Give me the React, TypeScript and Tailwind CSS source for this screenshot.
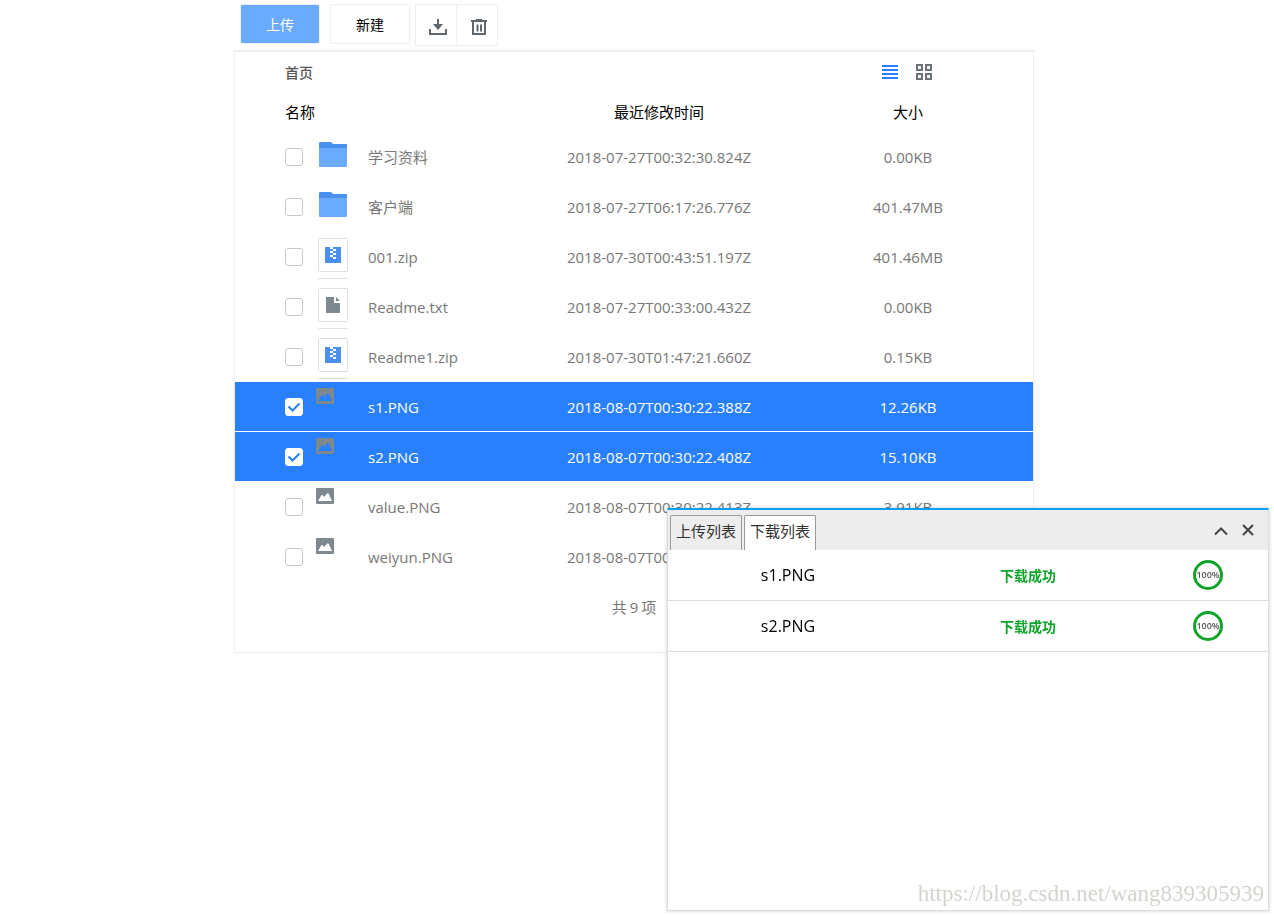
import { useState } from "react";

type FileKind = "folder" | "zip" | "txt" | "image";

interface FileItem {
  name: string;
  kind: FileKind;
  modified: string;
  size: string;
}

const files: FileItem[] = [
  { name: "学习资料", kind: "folder", modified: "2018-07-27T00:32:30.824Z", size: "0.00KB" },
  { name: "客户端", kind: "folder", modified: "2018-07-27T06:17:26.776Z", size: "401.47MB" },
  { name: "001.zip", kind: "zip", modified: "2018-07-30T00:43:51.197Z", size: "401.46MB" },
  { name: "Readme.txt", kind: "txt", modified: "2018-07-27T00:33:00.432Z", size: "0.00KB" },
  { name: "Readme1.zip", kind: "zip", modified: "2018-07-30T01:47:21.660Z", size: "0.15KB" },
  { name: "s1.PNG", kind: "image", modified: "2018-08-07T00:30:22.388Z", size: "12.26KB" },
  { name: "s2.PNG", kind: "image", modified: "2018-08-07T00:30:22.408Z", size: "15.10KB" },
  { name: "value.PNG", kind: "image", modified: "2018-08-07T00:30:22.413Z", size: "3.91KB" },
  { name: "weiyun.PNG", kind: "image", modified: "2018-08-07T00:30:22.433Z", size: "5.27KB" },
];

const downloads = [
  { name: "s1.PNG", status: "下载成功", percent: 100 },
  { name: "s2.PNG", status: "下载成功", percent: 100 },
];

function FileIcon({ kind }: { kind: FileKind }) {
  return (
    <svg width="34" height="42" viewBox="0 0 34 42" className="block" aria-hidden="true">
      {kind === "folder" && (
        <>
          <path d="M3 5a1 1 0 0 1 1-1h11l2 2h13a1 1 0 0 1 1 1v4H3z" fill="#4a90ee" />
          <path d="M3 10h28v18a1 1 0 0 1-1 1H4a1 1 0 0 1-1-1z" fill="#6aaaff" />
        </>
      )}
      {(kind === "zip" || kind === "txt") && (
        <>
          <rect x="2.5" y="0.5" width="29" height="33" rx="1" fill="#fff" stroke="#dedede" />
          <path d="M2.5 42v-.5a1 1 0 0 1 1-1h27a1 1 0 0 1 1 1v.5" fill="none" stroke="#dedede" />
        </>
      )}
      {kind === "zip" && (
        <>
          <path d="M9 9h16v16H9z" fill="#4a90ee" />
          <path d="M14 9h3v2h-3zM17 11h3v2h-3zM14 13h3v2h-3zM17 15h3v2h-3zM14 17h3v2h-3zM17 19h3v2h-3z" fill="#fff" />
        </>
      )}
      {kind === "txt" && (
        <path d="M10 9h8v6h6v10H10zM20 9l4 4h-4z" fill="#7d888f" />
      )}
      {kind === "image" && (
        <path
          fillRule="evenodd"
          d="M1 0h16a1 1 0 0 1 1 1v14a1 1 0 0 1-1 1H1a1 1 0 0 1-1-1V1a1 1 0 0 1 1-1zM2 13h14L12.500 5.500h-1.500L8 9 6.500 7h-1z"
          fill="#7d888f"
        />
      )}
    </svg>
  );
}

function Checkbox({ label, checked, onChange }: { label: string; checked: boolean; onChange: () => void }) {
  return (
    <div className="relative size-[18px]">
      <input
        type="checkbox"
        aria-label={label}
        checked={checked}
        onChange={onChange}
        className="block size-[18px] appearance-none rounded-[3px] border border-[#c8c8c8] bg-white checked:border-white"
      />
      {checked && (
        <svg viewBox="0 0 18 18" className="pointer-events-none absolute inset-0 size-[18px]" aria-hidden="true">
          <path d="M3.500 8.500l4 4 7-7" fill="none" stroke="#2980ff" strokeWidth="2" />
        </svg>
      )}
    </div>
  );
}

function Toolbar() {
  return (
    <div className="flex h-[50px] items-start pt-1 pl-1.5">
      <button className="h-10 w-20 rounded-xs border border-[#eee] bg-[#6aaaff] pt-0.5 text-sm text-white">上传</button>
      <button className="ml-2.5 h-10 w-20 rounded-xs border border-[#eee] bg-white pt-0.5 text-sm text-black">新建</button>
      <div className="ml-[5px] flex h-[42px] divide-x divide-[#eee] border border-[#eee] text-[#5f676c]">
        <button aria-label="下载" className="flex w-[41px] items-center justify-center pl-1">
          <svg width="18" height="18" viewBox="0 0 18 18" className="mt-1" fill="currentColor">
            <path d="M8 1h2v5h4L9 12 4 6h4z" />
            <path d="M0 11h2v4h14v-4h2v6H0z" />
          </svg>
        </button>
        <button aria-label="删除" className="flex w-10 items-center justify-center pl-1">
          <svg width="18" height="18" viewBox="0 0 18 18" className="mt-1" fill="none" stroke="currentColor" strokeWidth="2">
            <path d="M1 3h16M3 3v13h12V3M7.500 6.500v7M11 6.500v7M6 2h6" />
          </svg>
        </button>
      </div>
    </div>
  );
}

function TransferPanel() {
  const [tab, setTab] = useState("下载列表");
  return (
    <section className="fixed right-[5px] bottom-1 flex h-[403px] w-[602px] flex-col border border-t-2 border-[#ddd] border-t-[#0aa1f5] bg-white shadow-[0_0_4px_rgba(0,0,0,0.2)]">
      <header className="flex h-10 items-end bg-[#ededed] pl-0.5">
        <div role="tablist" className="flex gap-0.5">
          {["上传列表", "下载列表"].map((name) => (
            <button
              key={name}
              role="tab"
              aria-selected={tab === name}
              onClick={() => setTab(name)}
              className={`h-[35px] rounded-t-xs border border-b-0 border-[#999] px-[5px] pb-1 text-[15px] text-[#333] ${
                tab === name ? "bg-white" : "bg-[#ededed]"
              }`}
            >
              {name}
            </button>
          ))}
        </div>
        <div className="ml-auto flex h-10 items-center gap-3 pr-3.5 text-[#444]">
          <button aria-label="收起">
            <svg width="16" height="16" viewBox="0 0 16 16" className="block" fill="none" stroke="currentColor" strokeWidth="2">
              <path d="M1 12.500L7 6.500l6 6" />
            </svg>
          </button>
          <button aria-label="关闭">
            <svg width="12" height="12" viewBox="0 0 12 12" className="block" fill="none" stroke="currentColor" strokeWidth="2">
              <path d="M1 1l10 10M11 1L1 11" />
            </svg>
          </button>
        </div>
      </header>
      <table className="w-full table-fixed border-separate border-spacing-0 text-center">
        <tbody>
          {downloads.map((item) => (
            <tr key={item.name} className="h-[51px]">
              <td className="w-2/5 border-b border-[#ddd] p-0 text-base text-black">{item.name}</td>
              <td className="w-2/5 border-b border-[#ddd] p-0 pt-0.5 text-sm font-bold text-[#10a52a]">{item.status}</td>
              <td className="w-1/5 border-b border-[#ddd] p-0">
                <div className="mx-auto flex size-[30px] items-center justify-center rounded-full border-3 border-[#10a52a] text-[9px] font-semibold text-[#555]">
                  {item.percent}%
                </div>
              </td>
            </tr>
          ))}
        </tbody>
      </table>
      <p className="mt-auto pr-1 text-right font-['Liberation_Serif',serif] text-[23px] leading-8 text-[#d4d4ce]">
        https://blog.csdn.net/wang839305939
      </p>
    </section>
  );
}

export default function App() {
  const [selected, setSelected] = useState<string[]>(["s1.PNG", "s2.PNG"]);

  const toggle = (name: string) =>
    setSelected((prev) => (prev.includes(name) ? prev.filter((n) => n !== name) : [...prev, name]));

  return (
    <div className="min-h-screen bg-white pr-1.5 font-['Open_Sans','Noto_Sans_CJK_SC',sans-serif]">
      <main className="mx-auto max-w-[800px]">
        <Toolbar />
        <div className="border border-t-2 border-[#eee] pb-5">
          <div className="flex h-10 items-center pr-[101px] pl-[50px]">
            <a href="#" className="pt-0.5 text-sm font-medium text-[#555]">首页</a>
            <div className="ml-auto flex items-center gap-[18px]">
              <button aria-label="列表" className="text-[#2980ff]">
                <svg width="16" height="16" viewBox="0 0 16 16" className="block" fill="currentColor">
                  <path d="M0 1h16v2H0zM0 5h16v2H0zM0 9h16v2H0zM0 13h16v2H0z" />
                </svg>
              </button>
              <button aria-label="缩略图" className="text-[#6b7376]">
                <svg width="16" height="16" viewBox="0 0 16 16" className="block" fill="none" stroke="currentColor" strokeWidth="2">
                  <path d="M1 1h5v5H1zM10 1h5v5h-5zM1 10h5v5H1zM10 10h5v5h-5z" />
                </svg>
              </button>
            </div>
          </div>
          <table className="w-full table-fixed border-separate border-spacing-0 text-[15px]">
            <colgroup>
              <col className="w-[81px]" />
              <col className="w-[52px]" />
              <col />
              <col className="w-[248px]" />
              <col className="w-[250px]" />
            </colgroup>
            <thead>
              <tr className="h-10 text-black">
                <th colSpan={3} className="p-0 pl-[50px] text-left font-normal">名称</th>
                <th className="p-0 text-center font-normal">最近修改时间</th>
                <th className="p-0 text-center font-normal">大小</th>
              </tr>
            </thead>
            <tbody>
              {files.map((file) => {
                const active = selected.includes(file.name);
                return (
                  <tr key={file.name} className={`h-[50px] ${active ? "bg-[#2980ff] text-white" : "text-[#777]"}`}>
                    <td className="border-b border-white p-0 pl-[50px]">
                      <Checkbox label={file.name} checked={active} onChange={() => toggle(file.name)} />
                    </td>
                    <td className="border-b border-white p-0 pt-1.5 align-top">
                      <FileIcon kind={file.kind} />
                    </td>
                    <td className="border-b border-white p-0 pt-0.5">{file.name}</td>
                    <td className="border-b border-white p-0 pt-0.5 text-center">{file.modified}</td>
                    <td className="border-b border-white p-0 pt-0.5 text-center">{file.size}</td>
                  </tr>
                );
              })}
            </tbody>
          </table>
          <p className="flex h-[50px] items-center justify-center gap-[3px] text-[15px] text-[#777]">
            <span>共</span>
            <span>{files.length}</span>
            <span>项</span>
          </p>
        </div>
      </main>
      <TransferPanel />
    </div>
  );
}
